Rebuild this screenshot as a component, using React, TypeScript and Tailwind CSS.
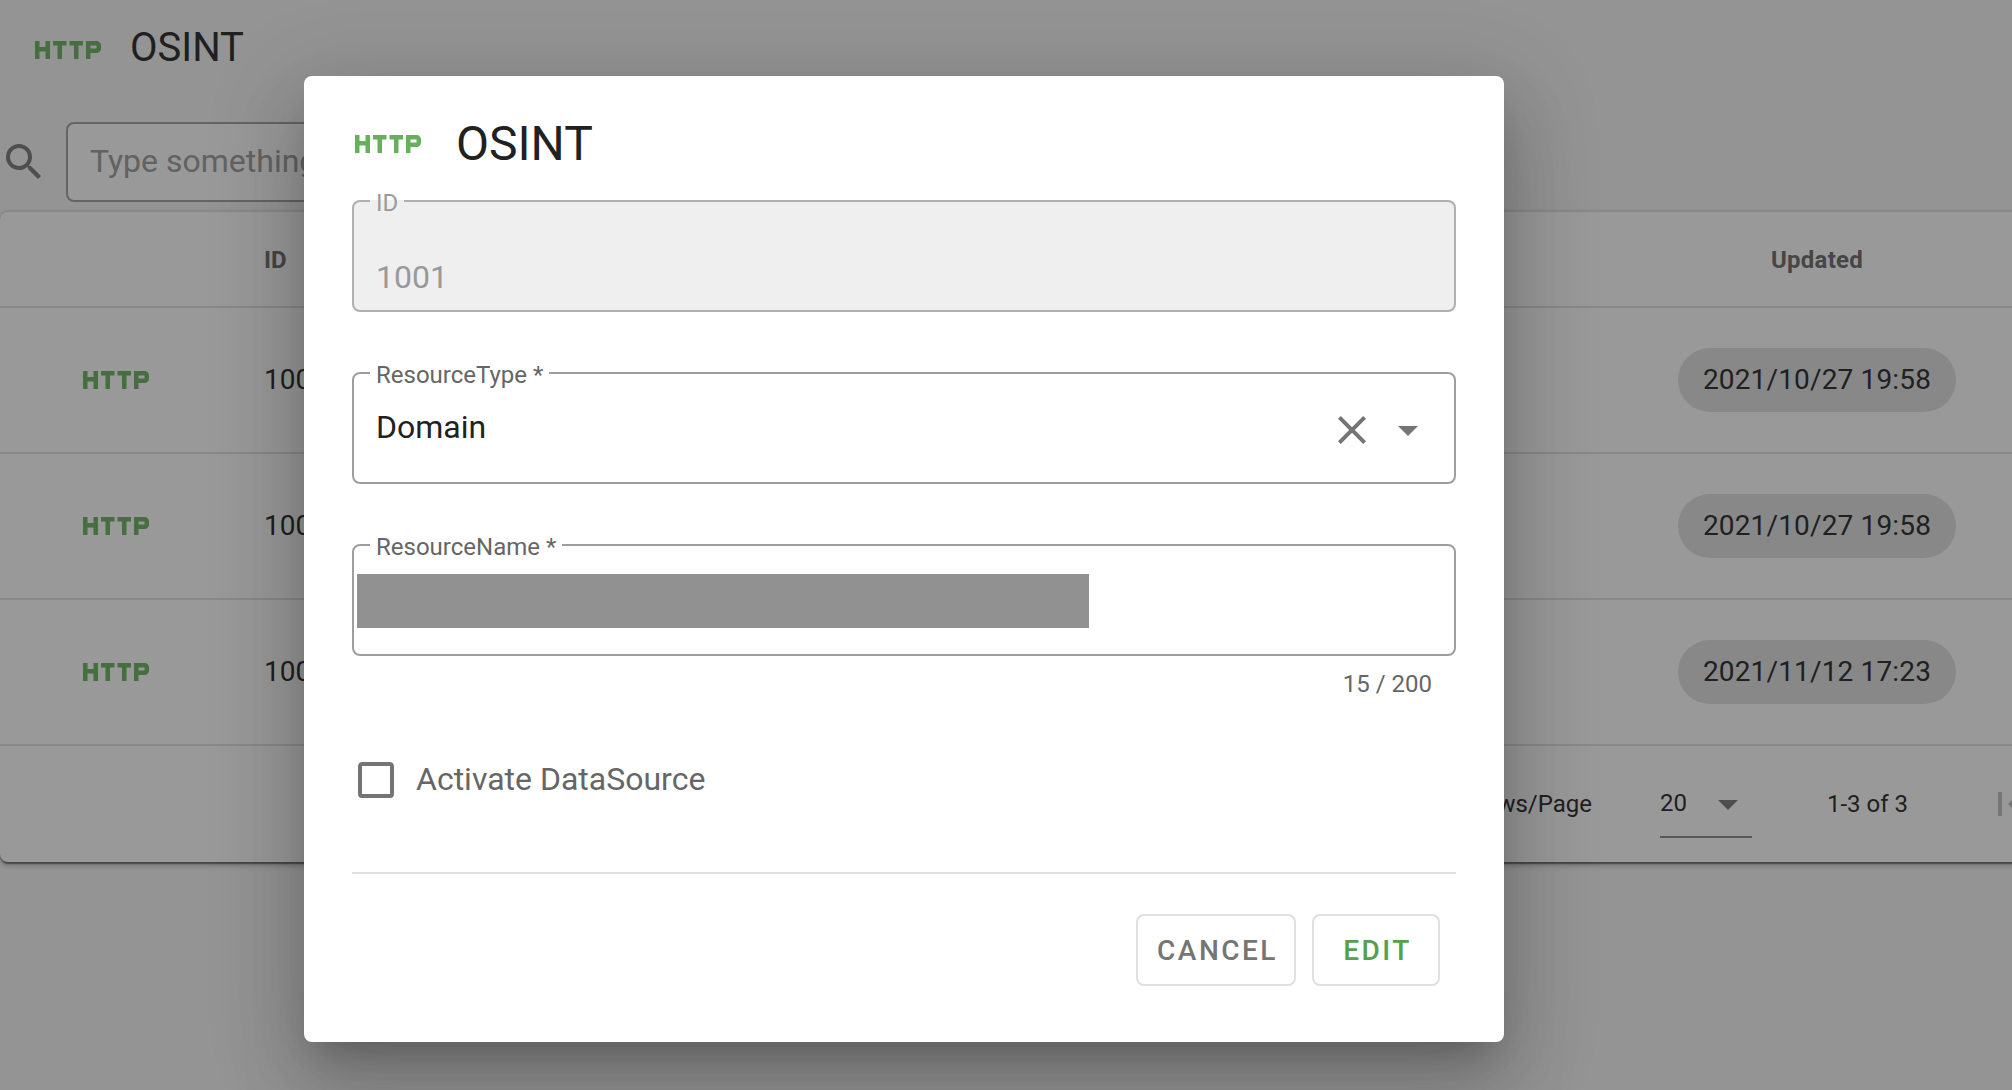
import type { ReactNode } from "react";

const paths = {
  http: "M4.5 11h-2V9H1v6h1.5v-2.5h2V15H6V9H4.5v2zm2.5-.5h1.5V15H10v-4.5h1.5V9H7v1.5zm5.5 0H14V15h1.5v-4.5H17V9h-4.5v1.5zm9-1.5H18v6h1.5v-2h2c.8 0 1.5-.7 1.5-1.5v-1c0-.8-.7-1.5-1.5-1.5zm0 2.5h-2v-1h2v1z",
  magnify:
    "M9.5,3A6.5,6.5 0 0,1 16,9.5C16,11.11 15.41,12.59 14.44,13.73L14.71,14H15.5L20.5,19L19,20.5L14,15.5V14.71L13.73,14.44C12.59,15.41 11.11,16 9.5,16A6.5,6.5 0 0,1 3,9.5A6.5,6.5 0 0,1 9.5,3M9.5,5C7,5 5,7 5,9.5C5,12 7,14 9.5,14C12,14 14,12 14,9.5C14,7 12,5 9.5,5Z",
  close:
    "M19,6.41L17.59,5L12,10.59L6.41,5L5,6.41L10.59,12L5,17.59L6.41,19L12,13.41L17.59,19L19,17.59L13.41,12L19,6.41Z",
  menuDown: "M7,10L12,15L17,10H7Z",
  pageFirst: "M18.41,16.59L13.82,12L18.41,7.41L17,6L11,12L17,18L18.41,16.59M6,6H8V18H6V6Z",
  checkboxBlank:
    "M19,3H5C3.89,3 3,3.89 3,5V19A2,2 0 0,0 5,21H19A2,2 0 0,0 21,19V5C21,3.89 20.1,3 19,3M19,5V19H5V5H19Z",
};

function Icon({ name, className }: { name: keyof typeof paths; className: string }) {
  return (
    <svg viewBox="0 0 24 24" fill="currentColor" className={`shrink-0 ${className}`}>
      <path d={paths[name]} />
    </svg>
  );
}

function Field({
  label,
  disabled,
  children,
}: {
  label: string;
  disabled?: boolean;
  children?: ReactNode;
}) {
  return (
    <div className={`relative h-28 rounded-lg ${disabled ? "bg-[#efefef]" : ""}`}>
      <fieldset
        className={`absolute inset-x-0 -top-3 bottom-0 rounded-lg border-2 pl-4 ${
          disabled ? "border-[#b0b0b0]" : "border-[#9e9e9e]"
        }`}
      >
        <legend
          className={`h-[26px] px-1.5 text-2xl leading-[30px] whitespace-nowrap ${
            disabled ? "text-[#9b9b9b]" : "text-[#666]"
          }`}
        >
          {label}
        </legend>
      </fieldset>
      {children}
    </div>
  );
}

const rows = [
  { id: "1001", updated: "2021/10/27 19:58" },
  { id: "1002", updated: "2021/10/27 19:58" },
  { id: "1003", updated: "2021/11/12 17:23" },
];

function Page() {
  return (
    <div className="flex h-full flex-col">
      <header className="flex h-[100px] items-center pl-8">
        <Icon name="http" className="size-[72px] text-[#66b05b]" />
        <h1 className="-mt-1 ml-[26px] text-[40px] leading-none">OSINT</h1>
      </header>
      <div className="mt-[22px] flex h-20 items-center">
        <Icon name="magnify" className="size-12 text-[#757575]" />
        <div className="ml-[18px] flex h-20 w-[700px] items-center rounded-lg border-2 border-[#9e9e9e] bg-white pb-0.5 pl-[22px] text-[32px] text-[#999]">
          Type something
        </div>
      </div>
      <section className="mt-2.5 w-[2200px] rounded-lg bg-white shadow-[0_2px_1px_0_rgba(0,0,0,0.35),0_-2px_0_0_rgba(0,0,0,0.06),0_6px_2px_-4px_rgba(0,0,0,0.2),0_4px_4px_0_rgba(0,0,0,0.14),0_2px_10px_0_rgba(0,0,0,0.12)]">
        <div className="flex h-24 items-center border-b-2 border-[#e0e0e0] pt-0.5 text-2xl font-bold text-[#666]">
          <span className="w-[1637px] pl-[264px]">ID</span>
          <span className="w-[360px] text-center tracking-[0.01em]">Updated</span>
        </div>
        {rows.map((row) => (
          <div key={row.id} className="flex h-[146px] items-center border-b-2 border-[#e0e0e0] text-[28px]">
            <div className="w-[264px] pl-20">
              <Icon name="http" className="size-[72px] text-[#66b05b]" />
            </div>
            <span className="w-[1373px]">{row.id}</span>
            <div className="flex w-[360px] justify-center">
              <span className="flex h-16 w-[278px] items-center justify-center rounded-full bg-[#e0e0e0] tracking-[0.15px]">
                {row.updated}
              </span>
            </div>
          </div>
        ))}
        <div className="flex h-[116px] items-center text-2xl">
          <span className="w-[1592px] shrink-0 text-right">Rows/Page</span>
          <div className="ml-[68px] flex h-[68px] w-[92px] shrink-0 items-center border-b-2 border-[#8a8a8a]">
            <span className="w-11">20</span>
            <Icon name="menuDown" className="mt-0.5 size-12 text-[#757575]" />
          </div>
          <span className="ml-[75px] w-[159px] shrink-0">1-3 of 3</span>
          <Icon name="pageFirst" className="size-12 text-[#bcbcbc]" />
        </div>
      </section>
    </div>
  );
}

function EditDialog() {
  return (
    <div className="flex h-[966px] w-[1200px] flex-col rounded-lg bg-white px-12 shadow-[0_22px_30px_-14px_rgba(0,0,0,0.2),0_48px_76px_6px_rgba(0,0,0,0.14),0_18px_92px_16px_rgba(0,0,0,0.12)]">
      <div className="mt-8 flex h-[72px] items-center">
        <Icon name="http" className="size-[72px] text-[#66b05b]" />
        <h2 className="ml-8 text-[48px] leading-none">OSINT</h2>
      </div>
      <div className="mt-5 flex flex-col gap-[60px]">
        <Field label="ID" disabled>
          <div className="flex h-full items-center pt-[41px] pl-6 text-[32px] text-[#999]">1001</div>
        </Field>
        <Field label="ResourceType *">
          <div className="flex h-full items-center pr-6 pl-6">
            <span className="-mt-0.5 flex-1 text-[32px]">Domain</span>
            <Icon name="close" className="mt-1 size-12 text-[#757575]" />
            <Icon name="menuDown" className="mt-1 ml-2 size-12 text-[#757575]" />
          </div>
        </Field>
        <Field label="ResourceName *">
          <div className="pt-[30px] pl-[5px]">
            <div className="h-[54px] w-[732px] bg-[#919191]" />
          </div>
        </Field>
      </div>
      <div className="mt-3 pr-6 text-right text-2xl text-[#666]">15 / 200</div>
      <label className="mt-14 flex h-12 items-center">
        <Icon name="checkboxBlank" className="size-12 text-[#757575]" />
        <span className="-mt-0.5 ml-4 text-[32px] text-[#666]">Activate DataSource</span>
      </label>
      <div className="mt-[68px] h-0.5 bg-[#e0e0e0]" />
      <div className="mt-10 flex justify-end gap-4 pr-4 text-[28px] font-medium tracking-[0.0892857em]">
        <button className="flex h-[72px] w-40 items-center justify-center rounded-lg border-2 border-[#e0e0e0] pt-0.5 pl-[3px] text-[#757575]">
          CANCEL
        </button>
        <button className="flex h-[72px] w-32 items-center justify-center rounded-lg border-2 border-[#e0e0e0] pt-0.5 pl-[3px] text-[#56a14c]">
          EDIT
        </button>
      </div>
    </div>
  );
}

export default function App() {
  return (
    <main className="relative h-[1090px] w-[2012px] overflow-hidden bg-[#f6f6f6] font-[Roboto,sans-serif] text-[#212121]">
      <Page />
      <div className="absolute inset-0 flex items-start bg-[#212121]/46 pt-[76px] pl-[304px]">
        <EditDialog />
      </div>
    </main>
  );
}
